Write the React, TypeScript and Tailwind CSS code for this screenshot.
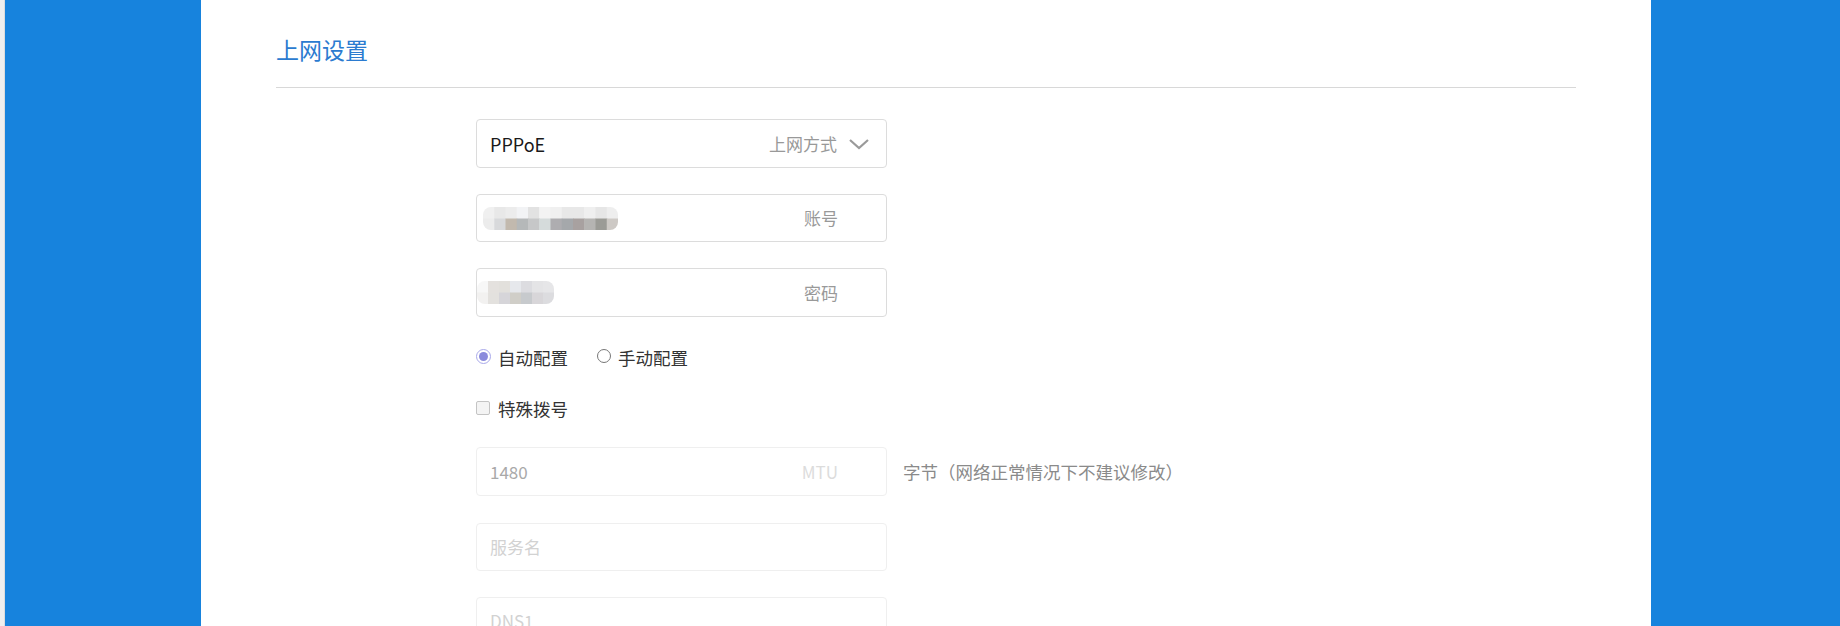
import React from "react";

const font = { fontFamily: '"Noto Sans CJK SC", "Noto Sans", sans-serif' };

const acctRow1 = ["#f0f0f0", "#e8e8e8", "#ececec", "#f2f3f5", "#e2e2e2", "#f3f3f3", "#f0f0f0", "#e8e8e8", "#e8e8e8", "#efefef", "#e6e6e6", "#eeeeee"];
const acctRow2 = ["#ececec", "#d8d9db", "#c2b9ae", "#b5b8b9", "#c6c7c8", "#d5dbdb", "#aeadb0", "#a5a8ab", "#a8a1a0", "#b5b4b2", "#9b9b96", "#cdc9c5"];
const pwRow1 = ["#f7f7f7", "#e4e1de", "#e2e0dc", "#e6e8ec", "#dcdce0", "#e4e4e6", "#e6e6e8"];
const pwRow2 = ["#f2f1f0", "#e3e1de", "#d6d5d9", "#d0cec8", "#c7cacd", "#d8d6d9", "#dcdcdf"];

function Mosaic({ r1, r2, cell, w }: { r1: string[]; r2: string[]; cell: number; w: number }) {
  return (
    <svg width={w} height={23} viewBox={`0 0 ${w} 23`} className="block">
      <defs>
        <clipPath id={`c${w}`}>
          <rect x="0" y="0" width={w} height="23" rx="8" />
        </clipPath>
      </defs>
      <g clipPath={`url(#c${w})`}>
        {r1.map((c, i) => (
          <rect key={"a" + i} x={i * cell} y={0} width={cell + 0.5} height={12} fill={c} />
        ))}
        {r2.map((c, i) => (
          <rect key={"b" + i} x={i * cell} y={11.5} width={cell + 0.5} height={11.5} fill={c} />
        ))}
      </g>
    </svg>
  );
}

export default function App() {
  return (
    <div className="flex min-h-[626px] w-full" style={font}>
      <div className="w-[5px] shrink-0 bg-[#efefef] border-r border-[#dcdcdc]" />
      <div className="w-[196px] shrink-0 bg-[#1783dd]" />
      <div className="w-[1450px] shrink-0 bg-white pl-[75px]">
        <div className="w-[1300px]">
          <div className="pt-[34px] text-[23px] leading-[30px] text-[#2b7bd0]">上网设置</div>
          <div className="mt-[23px] h-px bg-[#d8d8d8]" />
        </div>

        <div className="ml-[200px] flex flex-col pt-[31px]">
          {/* Select */}
          <div className="flex h-[49px] w-[411px] items-center rounded-[4px] border border-[#dcdcdc] pl-[13px] pr-[16px]">
            <span className="flex-1 text-[18px] leading-[24px] text-[#1a1a1a]">PPPoE</span>
            <span className="text-[17px] leading-[24px] text-[#999]">上网方式</span>
            <svg width="22" height="12" viewBox="0 0 22 12" className="ml-[11px]">
              <path d="M2 2 L11 10 L20 2" fill="none" stroke="#9a9a9a" strokeWidth="2.2" />
            </svg>
          </div>

          {/* Account */}
          <div className="mt-[26px] flex h-[48px] w-[411px] items-center rounded-[4px] border border-[#dcdcdc] pl-[6px] pr-[48px]">
            <div className="flex-1">
              <Mosaic r1={acctRow1} r2={acctRow2} cell={11.25} w={135} />
            </div>
            <span className="text-[17px] leading-[24px] text-[#999]">账号</span>
          </div>

          {/* Password */}
          <div className="mt-[26px] flex h-[49px] w-[411px] items-center rounded-[4px] border border-[#dcdcdc] pr-[48px]">
            <div className="flex-1">
              <Mosaic r1={pwRow1} r2={pwRow2} cell={11} w={77} />
            </div>
            <span className="text-[17px] leading-[24px] text-[#999]">密码</span>
          </div>

          {/* Radios */}
          <div className="mt-[27px] flex h-[24px] items-center">
            <span className="flex h-[15px] w-[15px] items-center justify-center rounded-full border border-[#a9a9ea] bg-white">
              <span className="h-[9px] w-[9px] rounded-full bg-[#8b8bdc]" />
            </span>
            <span className="ml-[7px] mt-[3px] text-[17.5px] leading-[24px] text-[#333]">自动配置</span>
            <span className="ml-[29px] h-[14px] w-[14px] rounded-full border border-[#777] bg-white" />
            <span className="ml-[7px] mt-[3px] text-[17.5px] leading-[24px] text-[#333]">手动配置</span>
          </div>

          {/* Checkbox */}
          <div className="mt-[28px] flex h-[24px] items-center">
            <span className="h-[14px] w-[14px] rounded-[2px] border border-[#c4c4c4] bg-[#f4f4f4]" />
            <span className="ml-[8px] mt-[2px] text-[17.5px] leading-[24px] text-[#333]">特殊拨号</span>
          </div>

          {/* MTU */}
          <div className="mt-[27px] flex items-center">
            <div className="flex h-[49px] w-[411px] items-center rounded-[4px] border border-[#efefef] pl-[13px] pr-[48px]">
              <span className="flex-1 text-[17px] leading-[24px] text-[#a9a9a9]">1480</span>
              <span className="text-[17px] leading-[24px] text-[#dcdcdc]">MTU</span>
            </div>
            <span className="ml-[16px] text-[17.5px] leading-[24px] text-[#8a8a8a]">字节（网络正常情况下不建议修改）</span>
          </div>

          {/* Service name */}
          <div className="mt-[27px] flex h-[48px] w-[411px] items-center rounded-[4px] border border-[#efefef] pl-[13px]">
            <span className="text-[17px] leading-[24px] text-[#d2d2d2]">服务名</span>
          </div>

          {/* DNS1 */}
          <div className="mt-[26px] flex h-[48px] w-[411px] items-center rounded-[4px] border border-[#efefef] pl-[13px]">
            <span className="text-[17px] leading-[24px] text-[#d2d2d2]">DNS1</span>
          </div>

          <div className="h-[40px]" />
        </div>
      </div>
      <div className="flex-1 bg-[#1783dd]" />
    </div>
  );
}
